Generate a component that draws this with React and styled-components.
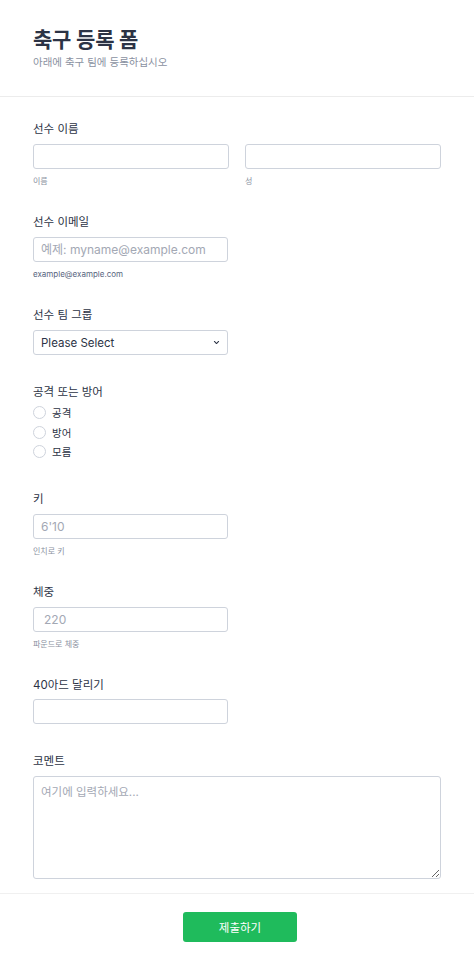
import React from "react";
import styled, { createGlobalStyle } from "styled-components";

const Global = createGlobalStyle`
  * { box-sizing: border-box; }
  html, body { margin: 0; padding: 0; background: #ffffff; }
  body { font-family: "Inter", "Noto Sans CJK KR", sans-serif; color: #2c3345; }
`;

const Page = styled.div`
  width: 474px;
  min-height: 968px;
  background: #ffffff;
  display: flex;
  flex-direction: column;
`;

const Header = styled.header`
  height: 97px;
  padding: 26px 33px 0;
  border-bottom: 1px solid #ececec;
`;

const Title = styled.h1`
  margin: 0;
  font-size: 21px;
  line-height: 28px;
  font-weight: 700;
  color: #2c3345;
  letter-spacing: -0.2px;
`;

const Subtitle = styled.p`
  margin: 2px 0 0;
  font-size: 10.5px;
  line-height: 14px;
  color: #8a91a1;
`;

const Body = styled.main`
  padding: 24px 33px 14px;
  display: flex;
  flex-direction: column;
  gap: 27px;
`;

const Field = styled.div`
  display: flex;
  flex-direction: column;
  margin-bottom: ${(p) => p.$extra || 0}px;
`;

const Label = styled.label`
  font-size: 11.5px;
  line-height: 16px;
  color: #2c3345;
  margin-bottom: ${(p) => p.$mb ?? 7}px;
`;

const Row = styled.div`
  display: grid;
  grid-template-columns: 196px 196px;
  gap: 16px;
`;

const Col = styled.div`
  display: flex;
  flex-direction: column;
`;

const Input = styled.input`
  width: ${(p) => p.$w || "195px"};
  height: 25px;
  border: 1px solid #ced3dc;
  border-radius: 3px;
  padding: 0 0 0 ${(p) => p.$pl || 7}px;
  font-family: inherit;
  font-size: 12px;
  color: #2c3345;
  background: #fff;
  outline: none;
  &::placeholder { color: #a3a8b4; }
`;

const Sub = styled.span`
  margin-top: 6px;
  font-size: 8px;
  line-height: 12px;
  color: ${(p) => (p.$dark ? "#57647e" : "#8a91a1")};
`;

const SelectBox = styled.div`
  width: 195px;
  height: 25px;
  border: 1px solid #ced3dc;
  border-radius: 3px;
  padding: 0 7px 0 7px;
  display: flex;
  align-items: center;
  justify-content: space-between;
  font-size: 11.5px;
  color: #2c3345;
`;

const Radios = styled.div`
  display: flex;
  flex-direction: column;
`;

const RadioRow = styled.label`
  height: 19.5px;
  display: flex;
  align-items: center;
  gap: 6px;
  font-size: 10.5px;
  color: #2c3345;
`;

const Circle = styled.span`
  width: 13px;
  height: 13px;
  border-radius: 50%;
  border: 1px solid #ced3dc;
  background: #fff;
`;

const TextArea = styled.textarea`
  width: 408px;
  height: 103px;
  border: 1px solid #ced3dc;
  border-radius: 3px;
  padding: 6px 7px;
  font-family: inherit;
  font-size: 11.5px;
  color: #2c3345;
  outline: none;
  resize: vertical;
  display: block;
  &::placeholder { color: #a3a8b4; }
`;

const Footer = styled.footer`
  border-top: 1px solid #f0f0f0;
  padding: 18px 0 0 6px;
  display: flex;
  justify-content: center;
`;

const Submit = styled.button`
  width: 114px;
  height: 30px;
  border: none;
  border-radius: 3px;
  background: #1fbb5c;
  color: #ffffff;
  font-family: inherit;
  font-size: 11.5px;
  cursor: pointer;
`;

const Chevron = () => (
  <svg width="7" height="7" viewBox="0 0 10 10" fill="none">
    <path d="M2 3.5 L5 6.5 L8 3.5" stroke="#2c3345" strokeWidth="1.5" strokeLinecap="round" strokeLinejoin="round" />
  </svg>
);

export default function App() {
  return (
    <>
      <Global />
      <Page>
        <Header>
          <Title>축구 등록 폼</Title>
          <Subtitle>아래에 축구 팀에 등록하십시오</Subtitle>
        </Header>
        <Body>
          <Field>
            <Label>선수 이름</Label>
            <Row>
              <Col>
                <Input $w="196px" />
                <Sub>이름</Sub>
              </Col>
              <Col>
                <Input $w="196px" />
                <Sub>성</Sub>
              </Col>
            </Row>
          </Field>
          <Field>
            <Label>선수 이메일</Label>
            <Input placeholder="예제: myname@example.com" />
            <Sub $dark>example@example.com</Sub>
          </Field>
          <Field $extra={2}>
            <Label>선수 팀 그룹</Label>
            <SelectBox>
              <span>Please Select</span>
              <Chevron />
            </SelectBox>
          </Field>
          <Field $extra={2}>
            <Label $mb={3}>공격 또는 방어</Label>
            <Radios>
              {["공격", "방어", "모름"].map((t) => (
                <RadioRow key={t}>
                  <Circle />
                  {t}
                </RadioRow>
              ))}
            </Radios>
          </Field>
          <Field>
            <Label>키</Label>
            <Input placeholder="6'10" />
            <Sub>인치로 키</Sub>
          </Field>
          <Field>
            <Label>체중</Label>
            <Input placeholder="220" $pl={10} />
            <Sub>파운드로 체중</Sub>
          </Field>
          <Field $extra={2}>
            <Label $mb={6}>40아드 달리기</Label>
            <Input />
          </Field>
          <Field>
            <Label>코멘트</Label>
            <TextArea placeholder="여기에 입력하세요..." />
          </Field>
        </Body>
        <Footer>
          <Submit>제출하기</Submit>
        </Footer>
      </Page>
    </>
  );
}
